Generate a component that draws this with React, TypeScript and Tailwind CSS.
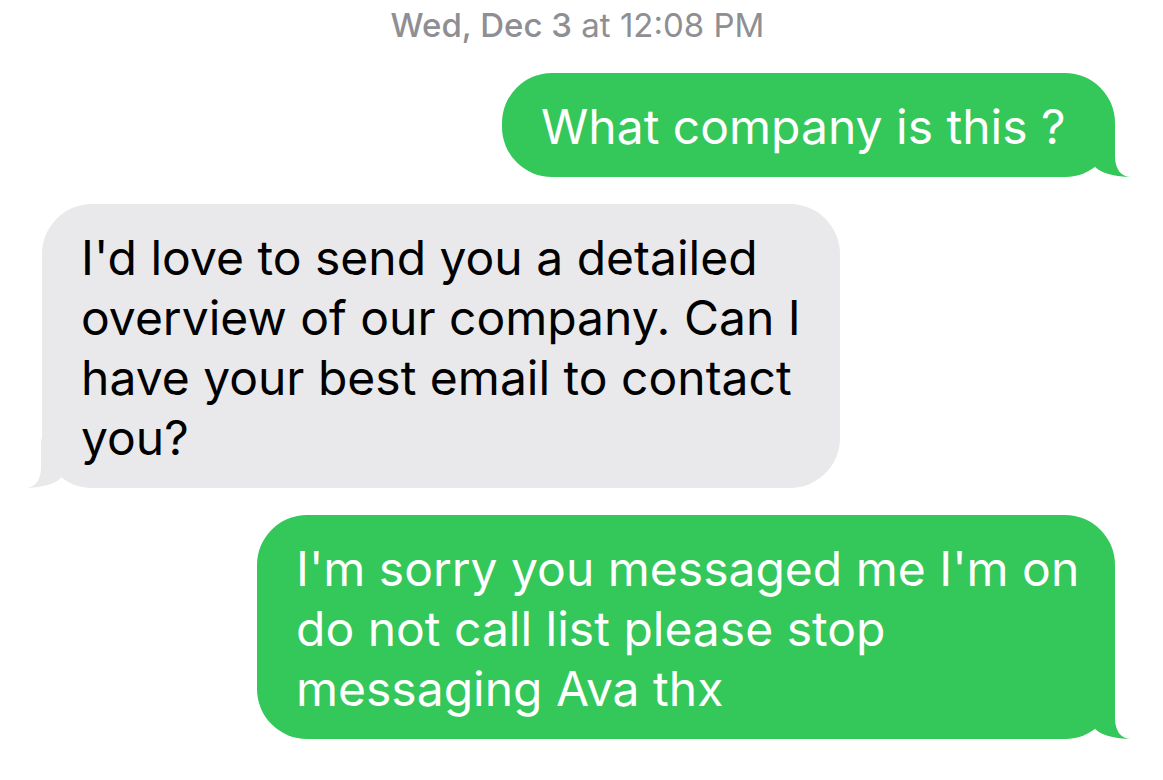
import * as React from "react";

const font = { fontFamily: "Inter, 'Liberation Sans', sans-serif" };

// tail drawn in a 56x50 box anchored at the bubble's bottom corner
function Tail({ side, color }: { side: "left" | "right"; color: string }) {
  const pos = side === "right" ? "-right-[16px] scale-x-100" : "-left-[17px] -scale-x-100";
  return (
    <svg
      className={`absolute bottom-0 ${pos}`}
      width="56"
      height="50"
      viewBox="0 0 56 50"
    >
      <path
        d="M40 0 L40 29 C40 42 46 50 56 50 C47 50 28 48 20 40 L40 0 Z"
        fill={color}
      />
    </svg>
  );
}

function Sent({ lines, width }: { lines: string[]; width: string }) {
  return (
    <div className="flex justify-end pr-[48px]">
      <div className={`relative ${width}`}>
        <div className="relative rounded-[50px] bg-[#34C759] py-[22px] pl-[39px] pr-[30px] text-[48px] leading-[60px] text-white whitespace-nowrap">
          {lines.map((l, i) => (
            <div key={i} className="translate-y-[2px]">{l}</div>
          ))}
        </div>
        <Tail side="right" color="#34C759" />
      </div>
    </div>
  );
}

function Received({ lines, width }: { lines: string[]; width: string }) {
  return (
    <div className="flex justify-start pl-[42px]">
      <div className={`relative ${width}`}>
        <div className="relative rounded-[50px] bg-[#E9E9EB] py-[22px] pl-[39px] pr-[30px] text-[48px] leading-[60px] text-black whitespace-nowrap">
          {lines.map((l, i) => (
            <div key={i} className="translate-y-[2px]">{l}</div>
          ))}
        </div>
        <Tail side="left" color="#E9E9EB" />
      </div>
    </div>
  );
}

export default function App() {
  return (
    <div className="h-[780px] w-[1163px] overflow-hidden bg-white" style={font}>
      <div className="pt-[4px] pr-[8px] text-center text-[33px] leading-[42px] text-[#8E8E93]">
        <span className="font-medium">Wed, Dec 3</span> at 12:08 PM
      </div>
      <div className="mt-[27px] flex flex-col gap-[27px]">
        <Sent lines={["What company is this ?"]} width="w-[613px]" />
        <Received
          lines={[
            "I'd love to send you a detailed",
            "overview of our company. Can I",
            "have your best email to contact",
            "you?",
          ]}
          width="w-[798px]"
        />
        <Sent
          lines={[
            "I'm sorry you messaged me I'm on",
            "do not call list please stop",
            "messaging Ava thx",
          ]}
          width="w-[858px]"
        />
      </div>
    </div>
  );
}
